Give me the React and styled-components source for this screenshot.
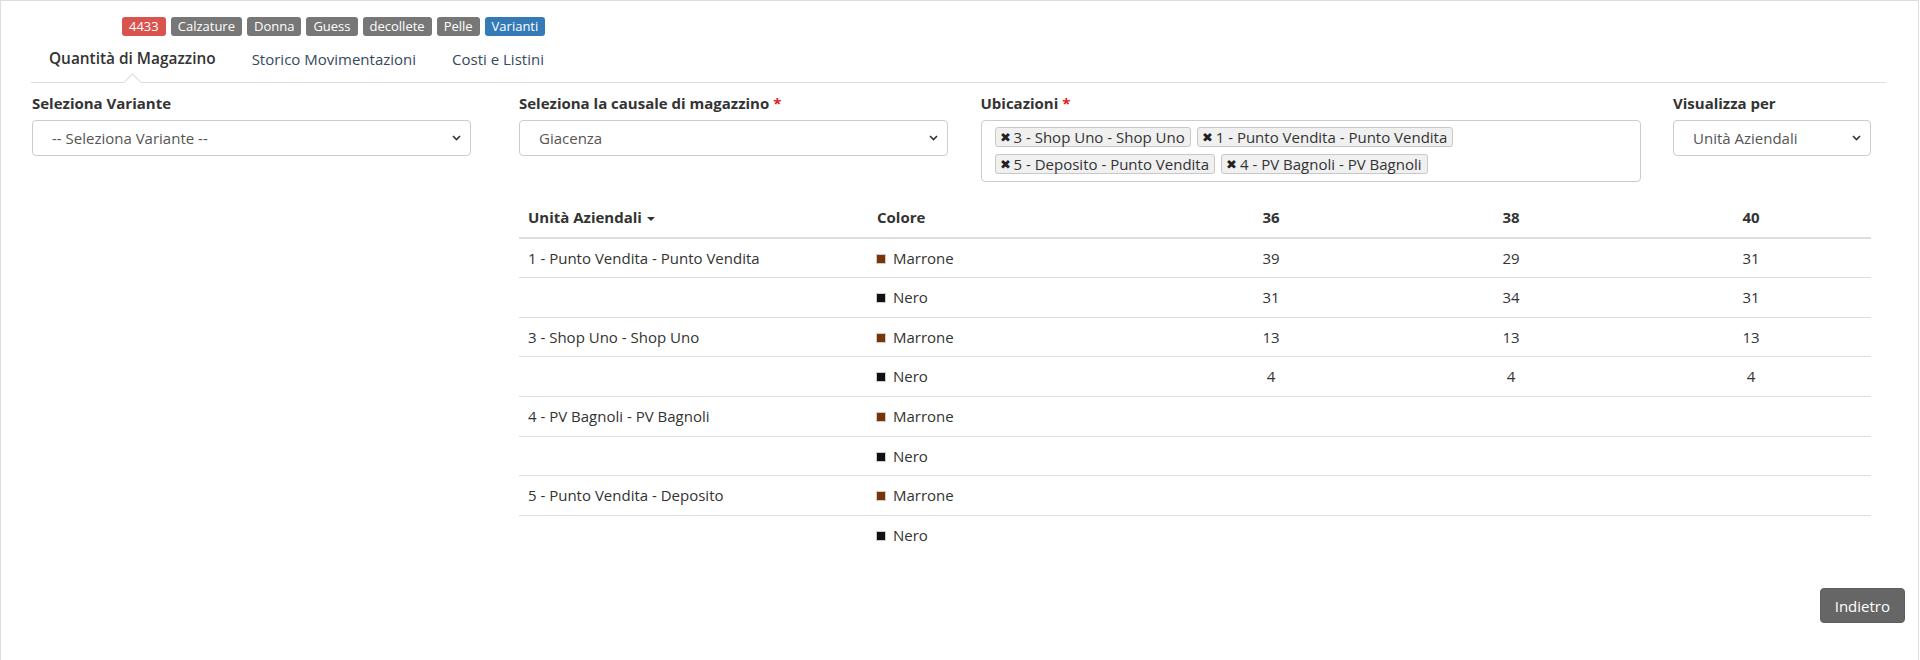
import React from "react";
import styled, { createGlobalStyle } from "styled-components";

const GlobalStyle = createGlobalStyle`
  body {
    margin: 0;
    background: #fff;
    font-family: "Open Sans", "Liberation Sans", sans-serif;
    font-size: 15px;
    color: #333;
  }
  * { box-sizing: border-box; }
`;

const badges = [
  { text: "4433", color: "#d9534f" },
  { text: "Calzature", color: "#777" },
  { text: "Donna", color: "#777" },
  { text: "Guess", color: "#777" },
  { text: "decollete", color: "#777" },
  { text: "Pelle", color: "#777" },
  { text: "Varianti", color: "#337ab7" },
];

const locations = [
  "3 - Shop Uno - Shop Uno",
  "1 - Punto Vendita - Punto Vendita",
  "5 - Deposito - Punto Vendita",
  "4 - PV Bagnoli - PV Bagnoli",
];

const rows = [
  { unit: "1 - Punto Vendita - Punto Vendita", color: "Marrone", values: [39, 29, 31] },
  { unit: "", color: "Nero", values: [31, 34, 31] },
  { unit: "3 - Shop Uno - Shop Uno", color: "Marrone", values: [13, 13, 13] },
  { unit: "", color: "Nero", values: [4, 4, 4] },
  { unit: "4 - PV Bagnoli - PV Bagnoli", color: "Marrone", values: [] },
  { unit: "", color: "Nero", values: [] },
  { unit: "5 - Punto Vendita - Deposito", color: "Marrone", values: [] },
  { unit: "", color: "Nero", values: [] },
];

const swatch = { Marrone: "#7a3506", Nero: "#111" };

const Chevron = () => (
  <svg width="9" height="6" viewBox="0 0 9 6">
    <path d="M1 1l3.5 3.5L8 1" fill="none" stroke="#333" strokeWidth="1.6" />
  </svg>
);

const App = () => {
  return (
    <Page>
      <GlobalStyle />
      <BadgeRow>
        {badges.map((b) => (
          <Badge key={b.text} $bg={b.color}>
            {b.text}
          </Badge>
        ))}
      </BadgeRow>
      <Tabs>
        <Tab $active>Quantità di Magazzino</Tab>
        <Tab>Storico Movimentazioni</Tab>
        <Tab>Costi e Listini</Tab>
      </Tabs>

      <Main>
        <LeftCol>
          <Label>Seleziona Variante</Label>
          <Select>
            <span>-- Seleziona Variante --</span>
            <Chevron />
          </Select>
        </LeftCol>

        <RightCol>
          <Filters>
            <div>
              <Label>
                Seleziona la causale di magazzino <Req>*</Req>
              </Label>
              <Select>
                <span>Giacenza</span>
                <Chevron />
              </Select>
            </div>
            <div>
              <Label>
                Ubicazioni <Req>*</Req>
              </Label>
              <TagBox>
                {locations.map((l) => (
                  <Tag key={l}>
                    <TagX>✖</TagX>
                    {l}
                  </Tag>
                ))}
              </TagBox>
            </div>
            <div>
              <Label>Visualizza per</Label>
              <Select>
                <span>Unità Aziendali</span>
                <Chevron />
              </Select>
            </div>
          </Filters>

          <Table>
            <colgroup>
              <col style={{ width: 349 }} />
              <col style={{ width: 283 }} />
              <col style={{ width: 240 }} />
              <col style={{ width: 240 }} />
              <col style={{ width: 240 }} />
            </colgroup>
            <thead>
              <tr>
                <Th>
                  Unità Aziendali <SortCaret />
                </Th>
                <Th>Colore</Th>
                <Th $center>36</Th>
                <Th $center>38</Th>
                <Th $center>40</Th>
              </tr>
            </thead>
            <tbody>
              {rows.map((r, i) => (
                <tr key={i}>
                  <Td>{r.unit}</Td>
                  <Td>
                    <Swatch $color={swatch[r.color]} />
                    {r.color}
                  </Td>
                  {[0, 1, 2].map((k) => (
                    <Td key={k} $center>
                      {r.values[k]}
                    </Td>
                  ))}
                </tr>
              ))}
            </tbody>
          </Table>
        </RightCol>
      </Main>

      <Footer>
        <BackButton>Indietro</BackButton>
      </Footer>
    </Page>
  );
};

const Page = styled.div`
  width: calc(100% - 1px);
  height: 660px;
  border: 1px solid #ddd;
  border-bottom: none;
  overflow: hidden;
`;

const BadgeRow = styled.div`
  display: flex;
  gap: 5px;
  padding-left: 121px;
  margin-top: 16px;
`;

const Badge = styled.span`
  display: inline-block;
  height: 19px;
  line-height: 19px;
  padding: 0 7px;
  border-radius: 3px;
  background: ${(p) => p.$bg};
  color: #fff;
  font-size: 13px;
`;

const Tabs = styled.div`
  display: flex;
  margin-left: 30px;
  width: 1855px;
  border-bottom: 1px solid #ddd;
`;

const Tab = styled.div`
  position: relative;
  padding: 13px 18px;
  line-height: 20px;
  font-size: ${(p) => (p.$active ? "15.4px" : "15px")};
  font-weight: ${(p) => (p.$active ? 600 : 400)};
  color: ${(p) => (p.$active ? "#333" : "#34495e")};

  ${(p) =>
    p.$active &&
    `
    &::after {
      content: "";
      position: absolute;
      left: 50%;
      bottom: -7px;
      width: 12px;
      height: 12px;
      margin-left: -6px;
      background: #fff;
      border-top: 1px solid #ddd;
      border-left: 1px solid #ddd;
      transform: rotate(45deg);
    }
  `}
`;

const Main = styled.div`
  display: flex;
  padding-left: 31px;
`;

const LeftCol = styled.div`
  width: 439px;
  margin-right: 48px;
`;

const RightCol = styled.div`
  width: 1352px;
`;

const Filters = styled.div`
  display: grid;
  grid-template-columns: 429px 660px 198px;
  justify-content: space-between;
  align-items: start;
`;

const Label = styled.div`
  margin-top: 10px;
  margin-bottom: 7px;
  line-height: 20px;
  font-weight: 700;
  color: #333;
`;

const Req = styled.span`
  color: #e31b1b;
`;

const Select = styled.div`
  display: flex;
  align-items: center;
  justify-content: space-between;
  height: 36px;
  padding: 0 9px 0 19px;
  border: 1px solid #ccc;
  border-radius: 4px;
  background: #fff;
  color: #555;
`;

const TagBox = styled.div`
  display: flex;
  flex-wrap: wrap;
  gap: 7px 6px;
  min-height: 62px;
  padding: 6px 13px;
  border: 1px solid #ccc;
  border-radius: 4px;
  align-content: flex-start;
`;

const Tag = styled.span`
  display: inline-flex;
  align-items: center;
  height: 20px;
  padding: 0 5px 0 4px;
  border: 1px solid #c8c8c8;
  border-radius: 3px;
  background: #f0f0f0;
  color: #333;
  line-height: 18px;
`;

const TagX = styled.span`
  font-size: 13px;
  margin-right: 3px;
  color: #222;
`;

const Table = styled.table`
  width: 1352px;
  margin-top: 16px;
  border-collapse: collapse;
  table-layout: fixed;
`;

const Th = styled.th`
  padding: 9px 9px;
  line-height: 20.6px;
  text-align: ${(p) => (p.$center ? "center" : "left")};
  font-weight: 700;
  color: #333;
  border-bottom: 2px solid #ddd;
`;

const SortCaret = styled.span`
  display: inline-block;
  width: 0;
  height: 0;
  margin-left: 1px;
  vertical-align: middle;
  border-left: 4px solid transparent;
  border-right: 4px solid transparent;
  border-top: 4px solid #333;
`;

const Td = styled.td`
  padding: 9px 9px;
  line-height: 20.6px;
  text-align: ${(p) => (p.$center ? "center" : "left")};
  color: #333;
  border-top: 1px solid #ddd;
  tbody tr:first-child & {
    border-top: none;
  }
`;

const Swatch = styled.span`
  display: inline-block;
  width: 8px;
  height: 8px;
  margin-right: 8px;
  background: ${(p) => p.$color};
  outline: 1px solid #ccc;
  vertical-align: 1px;
`;

const Footer = styled.div`
  display: flex;
  justify-content: flex-end;
  padding-right: 13px;
  margin-top: 34px;
`;

const BackButton = styled.button`
  height: 35px;
  padding: 0 14px;
  border: 1px solid #5e5e5e;
  border-radius: 4px;
  background: #666;
  color: #fff;
  font-family: "Open Sans", "Liberation Sans", sans-serif;
  font-size: 15px;
`;

export default App;
